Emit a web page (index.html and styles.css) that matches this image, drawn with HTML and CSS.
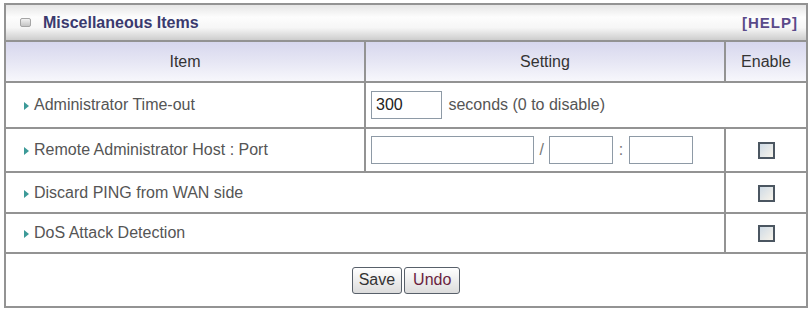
FILE: index.html
```html
<!DOCTYPE html>
<html lang="en">
<head>
    <meta charset="UTF-8">
    <title>Miscellaneous Items</title>
    <link rel="stylesheet" href="styles.css">
</head>
<body>
    <table class="panel">
        <colgroup>
            <col class="col-item">
            <col class="col-setting">
            <col class="col-enable">
        </colgroup>
        <tr class="title-row">
            <td colspan="3">
                <div class="title">
                    <span class="title-icon"></span>
                    <span class="title-text">Miscellaneous Items</span>
                    <a class="help" href="#">[HELP]</a>
                </div>
            </td>
        </tr>
        <tr class="head-row">
            <th>Item</th>
            <th>Setting</th>
            <th>Enable</th>
        </tr>
        <tr class="row row-first">
            <td class="item"><span class="arrow"></span>Administrator Time-out</td>
            <td class="setting" colspan="2">
                <input type="text" class="field field-time" value="300">
                <span class="note">seconds (0 to disable)</span>
            </td>
        </tr>
        <tr class="row row-second">
            <td class="item"><span class="arrow"></span>Remote Administrator Host : Port</td>
            <td class="setting">
                <input type="text" class="field field-host">
                <span class="sep">/</span>
                <input type="text" class="field field-port">
                <span class="sep">:</span>
                <input type="text" class="field field-port">
            </td>
            <td class="enable"><span class="check"></span></td>
        </tr>
        <tr class="row row-third">
            <td class="item" colspan="2"><span class="arrow"></span>Discard PING from WAN side</td>
            <td class="enable"><span class="check"></span></td>
        </tr>
        <tr class="row">
            <td class="item" colspan="2"><span class="arrow"></span>DoS Attack Detection</td>
            <td class="enable"><span class="check"></span></td>
        </tr>
        <tr class="foot-row">
            <td colspan="3">
                <button class="btn btn-save">Save</button><button class="btn btn-undo">Undo</button>
            </td>
        </tr>
    </table>
</body>
</html>
```

FILE: styles.css
```css
body {
    margin: 0;
    padding: 3px 0 0 4px;
    background-color: #fff;
    font-family: "Liberation Sans", Arial, sans-serif;
    font-size: 16px;
    color: #555;
}
.panel {
    border-collapse: collapse;
    table-layout: fixed;
    width: 802px;
    border: 2px solid #939393;
}
.col-item {
    width: 360px;
}
.col-setting {
    width: 360px;
}
.col-enable {
    width: 82px;
}
.panel td, .panel th {
    border: 2px solid #939393;
    padding: 0;
}
.title-row td {
    height: 35px;
    background: linear-gradient(#e6e6e6 0%, #fdfdfd 35%, #f6f6f6 65%, #cdcdcd 100%);
}
.title {
    display: flex;
    align-items: center;
    padding: 0 8px 0 14px;
}
.title-icon {
    width: 9px;
    height: 7px;
    border: 1px solid #a5a5a5;
    border-radius: 2px;
    background: linear-gradient(#f2f2f2, #c4c4c4);
    margin-right: 12px;
}
.title-text {
    font-weight: bold;
    color: #3a3a6e;
    flex: 1;
}
.help {
    font-weight: bold;
    font-size: 15px;
    letter-spacing: 1px;
    color: #5a4a8a;
    text-decoration: none;
}
.head-row th {
    height: 39px;
    font-weight: normal;
    color: #333;
    background: linear-gradient(#d7d7ee 0%, #e6e6f4 50%, #f7f7fc 100%);
}
.row td {
    height: 38px;
}
.row-first td {
    height: 44px;
}
.row-second td {
    height: 42px;
}
.row-third td {
    height: 39px;
}
.item {
    padding-left: 18px !important;
}
.arrow {
    display: inline-block;
    width: 0;
    height: 0;
    border-top: 4px solid transparent;
    border-bottom: 4px solid transparent;
    border-left: 5px solid #3c9a98;
    margin-right: 5px;
}
.setting {
    padding-left: 5px !important;
}
.field {
    box-sizing: border-box;
    height: 28px;
    border: 1px solid #8e9aa6;
    padding: 0 4px;
    font-family: "Liberation Sans", Arial, sans-serif;
    font-size: 16px;
    color: #222;
    vertical-align: middle;
}
.field-time {
    width: 71px;
}
.field-host {
    width: 163px;
}
.field-port {
    width: 64px;
}
.note {
    margin-left: 2px;
    vertical-align: middle;
}
.sep {
    color: #777;
    margin: 0 1px;
    vertical-align: middle;
}
.enable {
    text-align: center;
}
.check {
    display: inline-block;
    box-sizing: border-box;
    width: 17px;
    height: 17px;
    border: 2px solid #4b5661;
    background: linear-gradient(135deg, #cfdbe6, #f7f3ea);
    vertical-align: middle;
}
.foot-row td {
    height: 52px;
    text-align: center;
}
.btn {
    height: 27px;
    padding: 0 6px;
    margin: 0 1px;
    border: 1px solid #58606a;
    border-radius: 3px;
    background: linear-gradient(#ffffff, #dcdcdc);
    font-family: "Liberation Sans", Arial, sans-serif;
    font-size: 16px;
    color: #333;
    vertical-align: middle;
}
.btn-undo {
    padding: 0 8px;
    color: #6a1f40;
}
```
